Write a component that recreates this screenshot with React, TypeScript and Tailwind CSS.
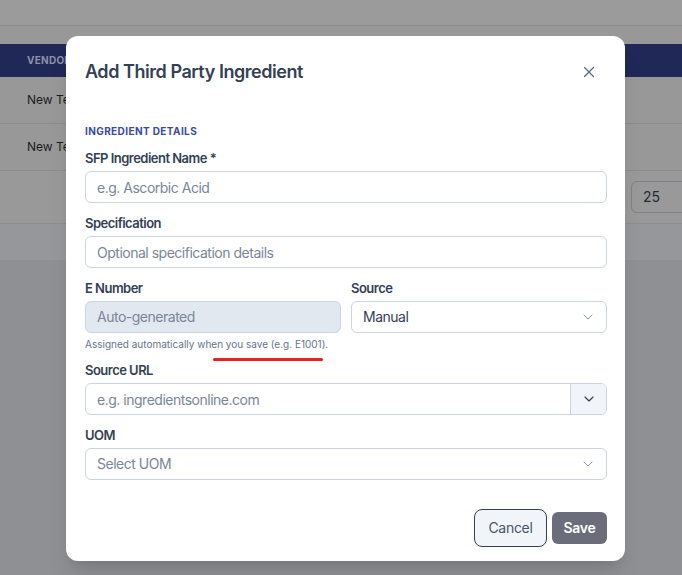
import { X, ChevronDown } from "lucide-react";

const labelCls = "block h-4 text-[13px] leading-4 font-semibold tracking-[-0.04em] text-[#334155] mb-[5px]";
const inputCls =
  "w-full h-8 rounded-md border border-[#cbd5e1] bg-white px-[11px] text-sm tracking-[-0.035em] text-[#334155] placeholder:text-[#7a8699] outline-none";

const BackgroundPage = () => (
  <div className="w-full">
    <div className="h-[26px] bg-[#9b9b9b] border-b border-[#8b8b8b]" />
    <div className="h-[18px] bg-[#989898]" />
    <div className="h-[33px] bg-[#1f2857] flex items-center px-[27px]">
      <span className="text-[10px] font-bold tracking-wide text-[#8b91a9]">VENDOR</span>
    </div>
    <div className="h-[47px] bg-[#989898] border-b border-[#8c8c8c] flex items-center px-[27px]">
      <span className="text-xs text-[#1c1c1c]">New Test</span>
    </div>
    <div className="h-[47px] bg-[#989898] border-b border-[#8c8c8c] flex items-center px-[27px]">
      <span className="text-xs text-[#1c1c1c]">New Test</span>
    </div>
    <div className="h-[53px] bg-[#999999] border-b border-[#8c8c8c] flex items-center justify-end">
      <div className="w-[60px] h-8 -mr-[9px] rounded-md border border-[#7f8186] flex items-center px-[11px]">
        <span className="text-sm text-[#1f2937]">25</span>
      </div>
    </div>
    <div className="h-[36px] bg-[#96979a]" />
    <div className="h-[315px] bg-[#8f9094]" />
  </div>
);

export default function App() {
  return (
    <div
      className="relative w-[682px] h-[575px] overflow-hidden"
      style={{ fontFamily: "Inter, 'Noto Sans', sans-serif" }}
    >
      <BackgroundPage />

      <div className="absolute left-[66px] top-[36px] w-[559px] h-[525px] rounded-xl bg-white shadow-xl pl-[19px] pr-[18px] pt-[22px]">
        <div className="flex items-center justify-between">
          <h2 className="text-lg leading-7 font-semibold tracking-[-0.025em] text-[#334155]">Add Third Party Ingredient</h2>
          <X className="w-[18px] h-[18px] text-[#5b6b82] mr-[9px]" strokeWidth={1.6} />
        </div>

        <div className="mt-[39px] text-[10px] leading-3 font-bold tracking-[0.04em] text-[#3b4aa3] mb-[13px]">
          INGREDIENT DETAILS
        </div>

        <div className="flex flex-col gap-3">
          <div>
            <label className={labelCls}>SFP Ingredient Name *</label>
            <input className={inputCls} placeholder="e.g. Ascorbic Acid" />
          </div>

          <div>
            <label className={labelCls}>Specification</label>
            <input className={inputCls} placeholder="Optional specification details" />
          </div>

          <div className="grid grid-cols-2 gap-x-[10px]">
            <div>
              <label className={labelCls}>E Number</label>
              <div className="w-full h-8 rounded-md border border-[#cbd5e1] bg-[#e2e8f0] px-[11px] flex items-center text-sm tracking-[-0.035em] text-[#7a8699]">
                Auto-generated
              </div>
              <p className="relative mt-[5px] text-[10px] leading-3 text-[#64748b] whitespace-nowrap">
                Assigned automatically when you save (e.g. E1001).
                <span className="absolute left-[128px] top-[20px] w-[110px] h-[3px] rounded-full bg-[#e8201f]" />
              </p>
            </div>
            <div>
              <label className={labelCls}>Source</label>
              <div className="w-full h-8 rounded-md border border-[#cbd5e1] bg-white pl-[11px] pr-[10px] flex items-center justify-between">
                <span className="text-sm tracking-[-0.035em] text-[#334155]">Manual</span>
                <ChevronDown className="w-4 h-4 text-[#8a96a8]" strokeWidth={1.5} />
              </div>
            </div>
          </div>

          <div>
            <label className={labelCls}>Source URL</label>
            <div className="flex h-8 rounded-md border border-[#cbd5e1] overflow-hidden">
              <input
                className="flex-1 min-w-0 h-full px-[11px] text-sm tracking-[-0.035em] text-[#334155] placeholder:text-[#7a8699] outline-none"
                placeholder="e.g. ingredientsonline.com"
              />
              <div className="w-9 h-full border-l border-[#cbd5e1] bg-[#f1f5f9] flex items-center justify-center">
                <ChevronDown className="w-4 h-4 text-[#334155]" strokeWidth={1.75} />
              </div>
            </div>
          </div>

          <div>
            <label className={labelCls}>UOM</label>
            <div className="w-full h-8 rounded-md border border-[#cbd5e1] bg-white pl-[11px] pr-[10px] flex items-center justify-between">
              <span className="text-sm tracking-[-0.035em] text-[#7a8699]">Select UOM</span>
              <ChevronDown className="w-4 h-4 text-[#8a96a8]" strokeWidth={1.5} />
            </div>
          </div>
        </div>

        <div className="mt-[29px] flex items-center justify-end gap-[5px]">
          <button className="w-[73px] h-[38px] rounded-lg border border-[#334155] bg-[#f1f5f9] text-sm tracking-[-0.02em] text-[#475569]">
            Cancel
          </button>
          <button className="w-[55px] h-8 rounded-md bg-[#6b6d7a] text-sm font-semibold tracking-[-0.02em] text-white">Save</button>
        </div>
      </div>
    </div>
  );
}
